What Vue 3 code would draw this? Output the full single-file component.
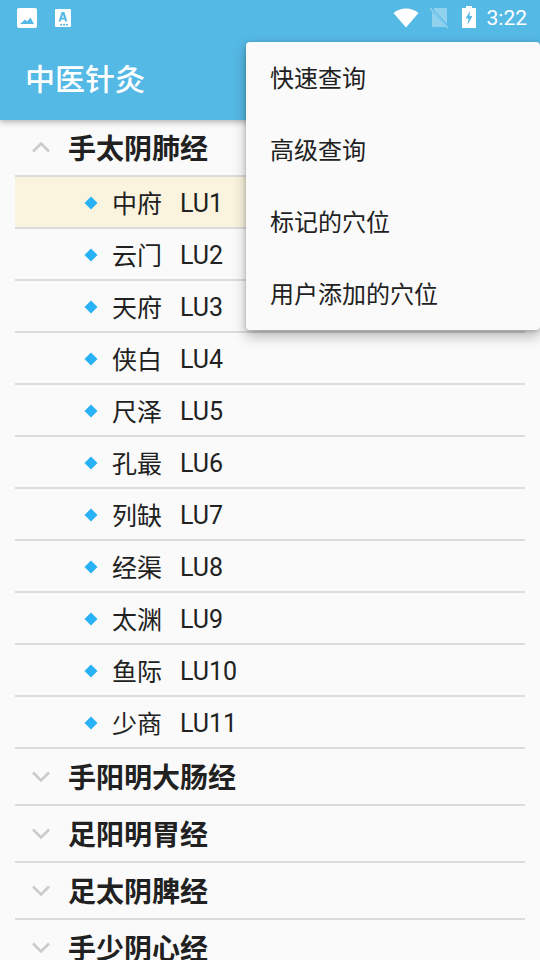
<script setup>
const points = [
  ['中府', 'LU1'], ['云门', 'LU2'], ['天府', 'LU3'], ['侠白', 'LU4'],
  ['尺泽', 'LU5'], ['孔最', 'LU6'], ['列缺', 'LU7'], ['经渠', 'LU8'],
  ['太渊', 'LU9'], ['鱼际', 'LU10'], ['少商', 'LU11'],
]
const groups = ['手阳明大肠经', '足阳明胃经', '足太阴脾经', '手少阴心经']
const menu = ['快速查询', '高级查询', '标记的穴位', '用户添加的穴位']
</script>

<template>
  <div class="screen">
    <header class="head">
      <div class="status">
        <svg class="ic-image" viewBox="0 0 20 20" width="20" height="20">
          <path fill-rule="evenodd" fill="#fff" d="M2 0h16a2 2 0 0 1 2 2v16a2 2 0 0 1-2 2H2a2 2 0 0 1-2-2V2a2 2 0 0 1 2-2zM3 16h14l-3.600-6.400-3.200 4-2-2.200z"/>
        </svg>
        <svg class="ic-app" viewBox="0 0 16 18" width="16" height="18">
          <path fill-rule="evenodd" fill="#fff" d="M1 0h14a1 1 0 0 1 1 1v16a1 1 0 0 1-1 1H1a1 1 0 0 1-1-1V1a1 1 0 0 1 1-1zM6.600 3 3.600 12.500h2.100l.6-2h3.300l.6 2h2.200L9.400 3zM7 8.800l.95-3.300.95 3.300z"/>
          <rect x="8" y="15" width="2" height="1.500" fill="#55b9e5"/>
          <rect x="11" y="15" width="2" height="1.500" fill="#55b9e5"/>
          <rect x="5" y="15" width="2" height="1.500" fill="#55b9e5"/>
        </svg>
        <span class="spacer"></span>
        <svg class="ic-wifi" viewBox="0 0 26 20" width="26" height="20">
          <path fill="#fff" d="M13 19.500 .5 5C4 2 8.200.5 13 .5S22 2 25.500 5z"/>
        </svg>
        <svg class="ic-sim" viewBox="0 0 20 22" width="20" height="22">
          <path fill="#fff" fill-opacity=".35" d="M5 1h12a1 1 0 0 1 1 1v15L5 3zM3 5l14 15H4a1 1 0 0 1-1-1z"/>
          <path stroke="#fff" stroke-opacity=".35" stroke-width="1.500" d="M1 1l18 20"/>
        </svg>
        <svg class="ic-bat" viewBox="0 0 14 22" width="14" height="22">
          <path fill-rule="evenodd" fill="#fff" d="M4 0h6v2h4v20H0V2h4zM8 5 3.500 12.500H6.500L5.500 19 10.500 10H7.500z"/>
        </svg>
        <span class="time">3:22</span>
      </div>
      <div class="bar">中医针灸</div>
    </header>

    <main class="list">
      <div class="group">
        <svg class="chev" viewBox="0 0 20 12" width="20" height="12">
          <path d="M2 10.500 10 2.500l8 8" fill="none" stroke="#cbcbcb" stroke-width="2.600"/>
        </svg>
        <span>手太阴肺经</span>
      </div>
      <div v-for="(p, i) in points" :key="p[1]" class="point" :class="{ on: i === 0 }">
        <svg class="dia" viewBox="0 0 14 14" width="14" height="14">
          <path d="M7 .5 13.500 7 7 13.500 .5 7z" fill="#29b1f6"/>
        </svg>
        <span class="name">{{ p[0] }}</span>
        <span class="code">{{ p[1] }}</span>
      </div>
      <div v-for="g in groups" :key="g" class="group">
        <svg class="chev down" viewBox="0 0 20 12" width="20" height="12">
          <path d="M2 1.500 10 9.500l8-8" fill="none" stroke="#cbcbcb" stroke-width="2.600"/>
        </svg>
        <span>{{ g }}</span>
      </div>
    </main>

    <nav class="menu">
      <div v-for="m in menu" :key="m" class="item">{{ m }}</div>
    </nav>
  </div>
</template>

<style scoped>
.screen {
  position: relative;
  width: 540px;
  height: 960px;
  overflow: hidden;
  background: #fafafa;
  font-family: "Noto Sans CJK SC", "Noto Sans", sans-serif;
  color: #212121;
}
.head {
  position: relative;
  z-index: 1;
  height: 120px;
  background: #55b9e5;
  color: #fff;
  box-shadow: 0 2px 6px rgba(0, 0, 0, .3);
}
.status {
  display: flex;
  align-items: center;
  height: 36px;
  padding: 0 13px 0 17px;
}
.ic-app { margin-left: 18px; }
.spacer { flex: 1; }
.ic-sim { margin-left: 10px; }
.ic-bat { margin-left: 13px; margin-top: -2px; }
.time {
  margin-left: 11px;
  font: 400 21px "Roboto", sans-serif;
}
.bar {
  display: flex;
  align-items: center;
  height: 84px;
  padding: 0 0 3px 25px;
  box-sizing: border-box;
  font-size: 30px;
  font-weight: 500;
  line-height: 1;
}
.list {
  display: flex;
  flex-direction: column;
  margin: 0 15px;
}
.group {
  flex: none;
  display: flex;
  align-items: center;
  height: 57px;
  box-sizing: border-box;
  padding: 0 0 2px 16px;
  border-bottom: 2px solid #dcdcdc;
  font-size: 28px;
  font-weight: 700;
  line-height: 1;
}
.chev { margin-right: 17px; }
.chev.down { margin-top: 2px; }
.point {
  flex: none;
  display: flex;
  align-items: center;
  height: 52px;
  box-sizing: border-box;
  padding-left: 69px;
  border-bottom: 2px solid #dcdcdc;
  font-size: 25px;
  line-height: 1;
}
.point.on { background: #faf4df; }
.dia { margin: 2px 14px 0 0; }
.code {
  margin: 2px 0 0 18px;
  font-family: "Roboto", sans-serif;
  font-size: 25px;
}
.menu {
  position: absolute;
  z-index: 2;
  top: 42px;
  right: 0;
  width: 294px;
  background: #fafafa;
  border-radius: 4px;
  box-shadow: 0 6px 14px rgba(0, 0, 0, .28), 0 1px 4px rgba(0, 0, 0, .2);
}
.item {
  display: flex;
  align-items: center;
  height: 72px;
  padding: 0 0 2px 24px;
  box-sizing: border-box;
  font-size: 24px;
  line-height: 1;
}
</style>

<style>
html, body { margin: 0; background: #fafafa; }
</style>
